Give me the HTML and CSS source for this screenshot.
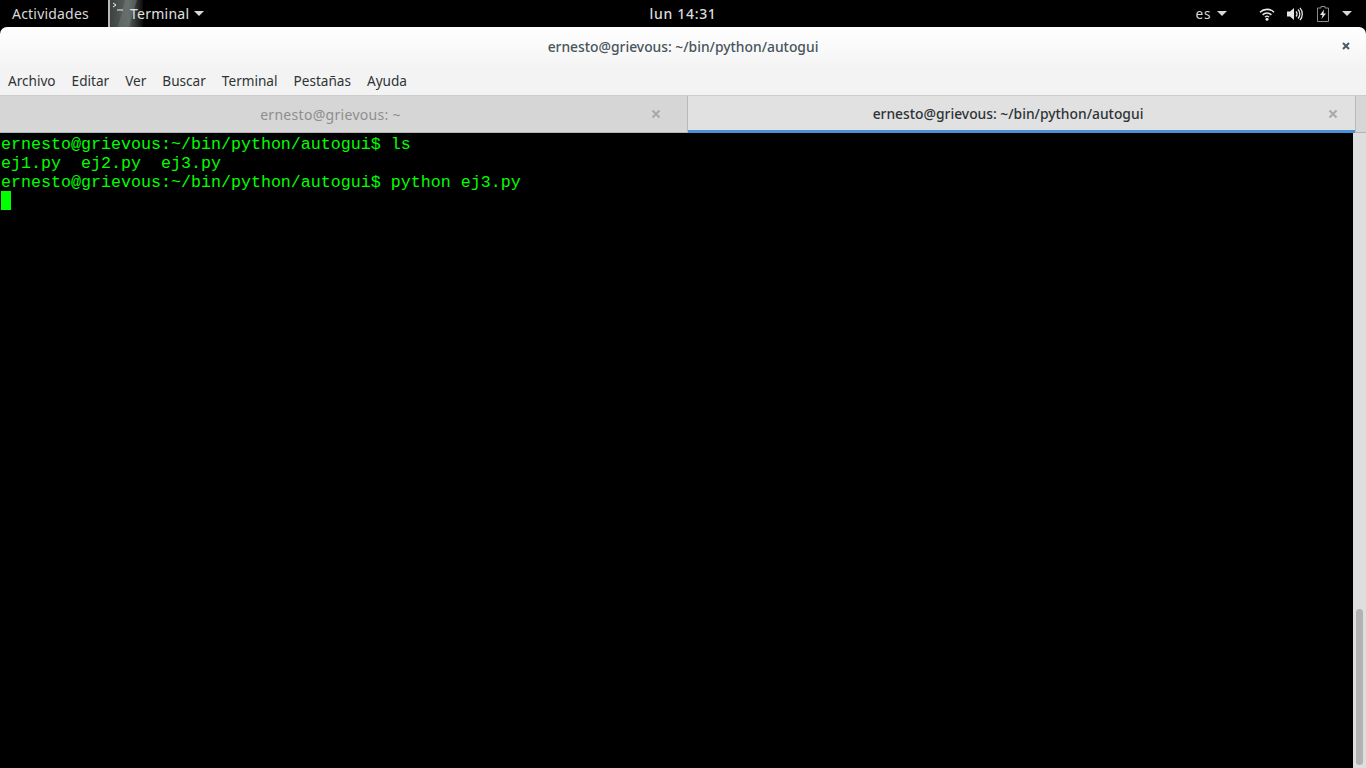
FILE: index.html
```html
<!DOCTYPE html>
<html lang="es">
<head>
<meta charset="utf-8">
<title>Terminal</title>
<link rel="stylesheet" href="styles.css">
</head>
<body>
<div class="topbar">
  <div class="tb-left">
    <span class="activities">Actividades</span>
    <span class="app-edge"></span>
    <span class="app-icon">
      <svg width="33" height="27" viewBox="0 0 33 27">
        <defs>
          <linearGradient id="ig" x1="0" y1="0" x2="1" y2="0">
            <stop offset="0" stop-color="#3c4240"/>
            <stop offset="0.55" stop-color="#59615e"/>
            <stop offset="1" stop-color="#0c0d0d"/>
          </linearGradient>
        </defs>
        <rect width="33" height="27" fill="url(#ig)"/>
        <path d="M15 0h12l-8 27H8z" fill="#7a8280" opacity=".45"/>
        <path d="M3 3l3 2-3 2" fill="none" stroke="#f2f2f2" stroke-width="1"/>
        <path d="M7 10h6" stroke="#f2f2f2" stroke-width="1"/>
      </svg>
    </span>
    <span class="app-name">Terminal</span>
    <span class="caret app-caret"></span>
  </div>
  <div class="clock">lun 14:31</div>
  <div class="tb-right">
    <span class="lang">es</span>
    <span class="caret lang-caret"></span>
    <svg class="ic-wifi" width="16" height="14" viewBox="0 0 16 14">
      <path d="M1 5.200a10 10 0 0 1 14 0" fill="none" stroke="#e6e6e6" stroke-width="1.600"/>
      <path d="M3.600 7.800a6.400 6.400 0 0 1 8.800 0" fill="none" stroke="#e6e6e6" stroke-width="1.600"/>
      <path d="M6 10a3 3 0 0 1 4 0" fill="none" stroke="#e6e6e6" stroke-width="1.400"/>
      <circle cx="8" cy="12.300" r="1.500" fill="#e6e6e6"/>
    </svg>
    <svg class="ic-vol" width="16" height="14" viewBox="0 0 16 14">
      <path d="M0 4.500h3L7 1v12L3 9.500H0z" fill="#e6e6e6"/>
      <path d="M9 4.500a3.500 3.500 0 0 1 0 5" fill="none" stroke="#e6e6e6" stroke-width="1.300"/>
      <path d="M11 2.500a6.500 6.500 0 0 1 0 9" fill="none" stroke="#e6e6e6" stroke-width="1.300"/>
      <path d="M13 .8a9.500 9.500 0 0 1 0 12.400" fill="none" stroke="#e6e6e6" stroke-width="1.300"/>
    </svg>
    <svg class="ic-bat" width="12" height="16" viewBox="0 0 12 16">
      <path d="M4 .5h4v1.500h3.500v13.500H.5V2H4z" fill="none" stroke="#8c8c8c" stroke-width="1"/>
      <path d="M7 3.500L3 9h2.500L4.500 13 9 7.500H6.500z" fill="#e6e6e6"/>
    </svg>
    <span class="caret sys-caret"></span>
  </div>
</div>
<div class="window">
  <div class="titlebar">
    <span class="title">ernesto@grievous: ~/bin/python/autogui</span>
    <svg class="win-close" width="8" height="8" viewBox="0 0 8 8">
      <path d="M1 1l6 6M7 1l-6 6" stroke="#4c5a63" stroke-width="2"/>
    </svg>
  </div>
  <div class="menubar">
    <span>Archivo</span><span>Editar</span><span>Ver</span><span>Buscar</span><span>Terminal</span><span>Pestañas</span><span>Ayuda</span>
  </div>
  <div class="tabs">
    <div class="tab tab-off">
      <span class="tab-label">ernesto@grievous: ~</span>
      <svg class="tab-close" width="10" height="10" viewBox="0 0 10 10"><path d="M1.500 1.500l7 7M8.500 1.500l-7 7" stroke="#a9a9a9" stroke-width="2"/></svg>
    </div>
    <div class="tab tab-on">
      <span class="tab-label">ernesto@grievous: ~/bin/python/autogui</span>
      <svg class="tab-close" width="10" height="10" viewBox="0 0 10 10"><path d="M1.500 1.500l7 7M8.500 1.500l-7 7" stroke="#a9a9a9" stroke-width="2"/></svg>
    </div>
    <div class="tab-rest"></div>
  </div>
  <div class="content">
    <div class="term">
      <div class="line">ernesto@grievous:~/bin/python/autogui$ ls</div>
      <div class="line">ej1.py  ej2.py  ej3.py</div>
      <div class="line">ernesto@grievous:~/bin/python/autogui$ python ej3.py</div>
      <div class="line"><span class="cursor"></span></div>
    </div>
    <div class="scrollbar"><div class="thumb"></div></div>
  </div>
</div>
</body>
</html>
```
FILE: styles.css
```css
* { box-sizing: border-box; }
html, body { margin: 0; height: 100%; overflow: hidden; background: #000; }
body { width: 1366px; height: 768px; display: flex; flex-direction: column; font-family: "Noto Sans", "Open Sans", sans-serif; font-size: 13.6px; }

.topbar { height: 27px; flex: none; background: #000; color: #d8d8d8; font-size: 14px; display: grid; grid-template-columns: 1fr auto 1fr; align-items: center; }
.tb-left { display: flex; align-items: center; height: 27px; }
.activities { margin-left: 12px; width: 96px; letter-spacing: .2px; }
.app-edge { width: 2px; height: 27px; background: #b9b9b9; }
.app-icon { display: block; width: 33px; height: 27px; }
.app-icon svg { display: block; }
.app-name { margin-left: -13px; position: relative; color: #e2e2e2; letter-spacing: .25px; }
.caret { display: inline-block; width: 0; height: 0; border-left: 5px solid transparent; border-right: 5px solid transparent; border-top: 5px solid #d8d8d8; }
.app-caret { margin-left: 5px; }
.clock { font-weight: 500; letter-spacing: .7px; color: #dcdcdc; }
.tb-right { display: flex; align-items: center; justify-content: flex-end; height: 27px; padding-right: 14px; }
.lang { margin-right: 6px; font-size: 13.6px; letter-spacing: .6px; }
.lang-caret { margin-right: 32px; }
.ic-wifi { margin-right: 12px; }
.ic-vol { margin-right: 14px; }
.ic-bat { margin-right: 13px; }

.window { flex: 1; display: flex; flex-direction: column; min-height: 0; border-radius: 7px 7px 0 0; overflow: hidden; }
.titlebar { height: 41px; flex: none; background: linear-gradient(#ffffff, #f4f4f4); display: flex; align-items: center; justify-content: center; position: relative; padding-bottom: 2px; }
.title { color: #48555c; font-size: 13.85px; font-weight: 500; }
.win-close { position: absolute; right: 16px; top: 15px; }
.menubar { height: 27px; flex: none; background: #f3f3f3; display: flex; align-items: center; padding-left: 8px; gap: 16px; color: #2e3436; padding-bottom: 3px; }
.tabs { height: 38px; flex: none; display: flex; background: #d6d6d6; border-top: 1px solid #cdcdcd; box-shadow: inset 0 1px 0 #c4c4c4; }
.tab { position: relative; display: flex; align-items: center; justify-content: center; height: 37px; font-size: 13.85px; }
.tab-off { width: 688px; background: #d6d6d6; border-right: 1px solid #b8b8b8; border-bottom: 1px solid #b4b4b4; color: #8e8e8e; padding-right: 26px; }
.tab-off .tab-label { font-size: 14px; letter-spacing: .3px; }
.tab-on { width: 667px; background: #e1e1e1; border-bottom: 3px solid #4a90d9; color: #2e3436; font-weight: 500; padding: 1px 27px 0 0; }
.tab-rest { flex: 1; height: 37px; background: #d6d6d6; border-left: 1px solid #b8b8b8; border-bottom: 1px solid #b4b4b4; }
.tab-close { position: absolute; top: 13px; }
.tab-off .tab-close { right: 26px; }
.tab-on .tab-close { right: 17px; }

.content { flex: 1; display: flex; min-height: 0; }
.term { width: 1353px; background: #000; color: #00ff00; font-family: "Liberation Mono", monospace; font-size: 16.67px; padding: 1px 0 0 1px; }
.line { height: 19px; line-height: 21px; white-space: pre; }
.cursor { display: inline-block; width: 10px; height: 19px; background: #00ff00; vertical-align: top; }
.scrollbar { flex: 1; background: #dedede; position: relative; }
.thumb { position: absolute; left: 3px; width: 7px; top: 476px; height: 156px; background: #b2b2b2; border-radius: 4px; }
```
